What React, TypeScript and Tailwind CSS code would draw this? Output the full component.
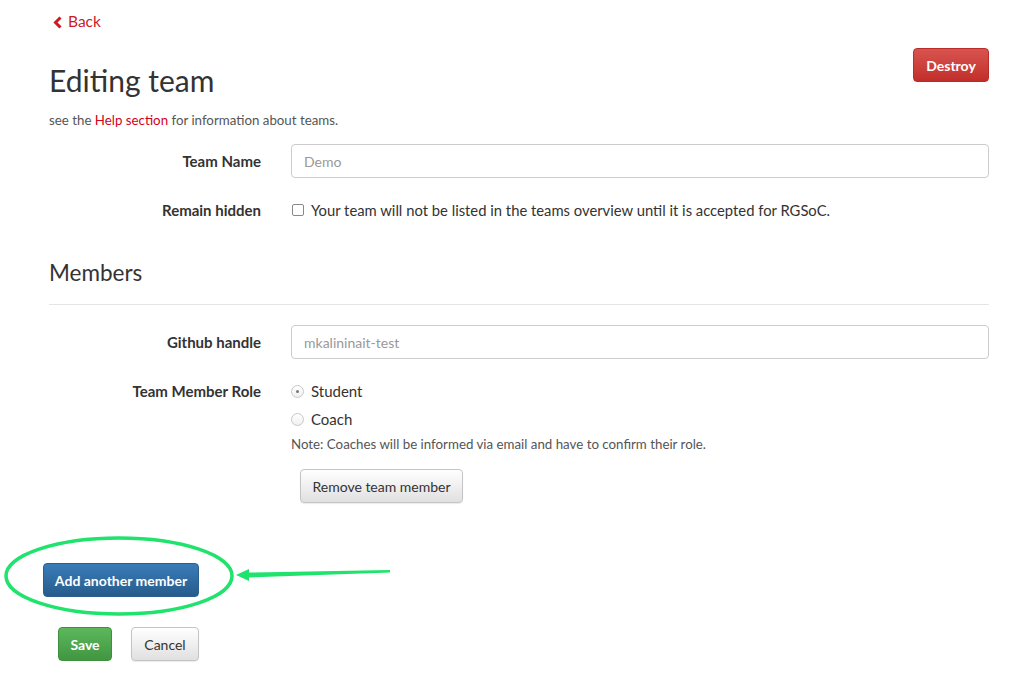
import React from "react";

const btnGray =
  "h-[34px] rounded-[4px] border border-[#c4c4c4] bg-gradient-to-b from-white to-[#e0e0e0] text-[14px] text-[#333] shadow-[0_1px_1px_rgba(0,0,0,0.08)]";

function Label({ children }: { children: React.ReactNode }) {
  return (
    <div className="w-[212px] shrink-0 text-right text-[15px] font-bold text-[#333]">
      {children}
    </div>
  );
}

export default function App() {
  return (
    <div
      className="relative h-[699px] w-[1030px] overflow-hidden bg-white text-[#333]"
      style={{ fontFamily: "Lato, 'Open Sans', sans-serif" }}
    >
      <div className="pl-[49px] pr-[41px]">
        {/* back link */}
        <a className="mt-[12px] flex h-5 items-center gap-[5px] pl-[4px] text-[15.5px] text-[#d0191f]">
          <svg width="10" height="13" viewBox="0 0 10 13">
            <polyline
              points="7.5,1.5 2.5,6.5 7.5,11.5"
              fill="none"
              stroke="#d0191f"
              strokeWidth="3"
            />
          </svg>
          Back
        </a>

        <div className="mt-[16px] flex items-start justify-between">
          <h1 className="mt-[14px] text-[30px] leading-[36px] text-[#333]">Editing team</h1>
          <button className="h-[34px] w-[76px] rounded-[4px] border border-[#b92c28] bg-gradient-to-b from-[#d9534f] to-[#c12e2a] text-[14px] font-bold text-white">
            Destroy
          </button>
        </div>

        <p className="mt-[13px] text-[13.3px] leading-[18px] text-[#555]">
          see the <span className="text-[#d0021b]">Help section</span> for information about teams.
        </p>

        {/* team name */}
        <div className="mt-[15px] flex items-center gap-[30px]">
          <Label>Team Name</Label>
          <div className="flex h-[34px] flex-1 items-center rounded-[4px] border border-[#ccc] px-[12px] text-[14px] text-[#999]">
            Demo
          </div>
        </div>

        <div className="mt-[22px] flex h-5 items-center gap-[30px]">
          <Label>Remain hidden</Label>
          <div className="flex items-center gap-[7px] text-[14.8px]">
            <span className="ml-[1px] h-[12px] w-[12px] rounded-[2px] border border-[#888]" />
            Your team will not be listed in the teams overview until it is accepted for RGSoC.
          </div>
        </div>

        <h2 className="mt-[39px] text-[22.5px] leading-[28px] text-[#333]">Members</h2>
        <div className="mt-[17px] border-t border-[#e5e5e5]" />

        <div className="mt-[20px] flex items-center gap-[30px]">
          <Label>Github handle</Label>
          <div className="flex h-[34px] flex-1 items-center rounded-[4px] border border-[#ccc] px-[12px] text-[14px] text-[#999]">
            mkalininait-test
          </div>
        </div>

        <div className="mt-[22px] flex items-start gap-[30px]">
          <div className="flex h-5 items-center">
            <Label>Team Member Role</Label>
          </div>
          <div className="flex flex-col">
            <div className="flex h-5 items-center gap-[7px] text-[15px]">
              <span className="flex h-[13px] w-[13px] items-center justify-center rounded-full border border-[#c8c8c8] bg-gradient-to-b from-white to-[#f0f0f0]">
                <span className="h-[3px] w-[3px] rounded-full bg-[#777]" />
              </span>
              Student
            </div>
            <div className="mt-[8px] flex h-5 items-center gap-[7px] text-[15px]">
              <span className="h-[13px] w-[13px] rounded-full border border-[#c8c8c8] bg-gradient-to-b from-white to-[#f0f0f0]" />
              Coach
            </div>
            <p className="mt-[6px] text-[13.3px] leading-[18px] text-[#555]">
              Note: Coaches will be informed via email and have to confirm their role.
            </p>
            <button className={`${btnGray} ml-[9px] mt-[16px] w-[163px]`}>Remove team member</button>
          </div>
        </div>

        <button className="-ml-[6px] mt-[60px] h-[34px] w-[156px] rounded-[4px] border border-[#2b5e8c] bg-gradient-to-b from-[#3a7cb8] to-[#275c8c] text-[14px] font-bold text-white">
          Add another member
        </button>

        <div className="mt-[30px] flex gap-[19px] pl-[9px]">
          <button className="h-[34px] w-[54px] rounded-[4px] border border-[#3e8f3e] bg-gradient-to-b from-[#5cb85c] to-[#419641] text-[14px] font-bold text-white">
            Save
          </button>
          <button className={`${btnGray} w-[68px]`}>Cancel</button>
        </div>
      </div>

      {/* annotation */}
      <svg
        className="pointer-events-none absolute left-0 top-0"
        width="1030"
        height="699"
        viewBox="0 0 1030 699"
      >
        <ellipse cx="119" cy="576" rx="113" ry="38" fill="none" stroke="#1fe36c" strokeWidth="3.5" />
        <polygon
          points="236,575 249,569 249,572.5 390,570 390,572.5 249,577.5 249,581"
          fill="#1fe36c"
        />
      </svg>
    </div>
  );
}
